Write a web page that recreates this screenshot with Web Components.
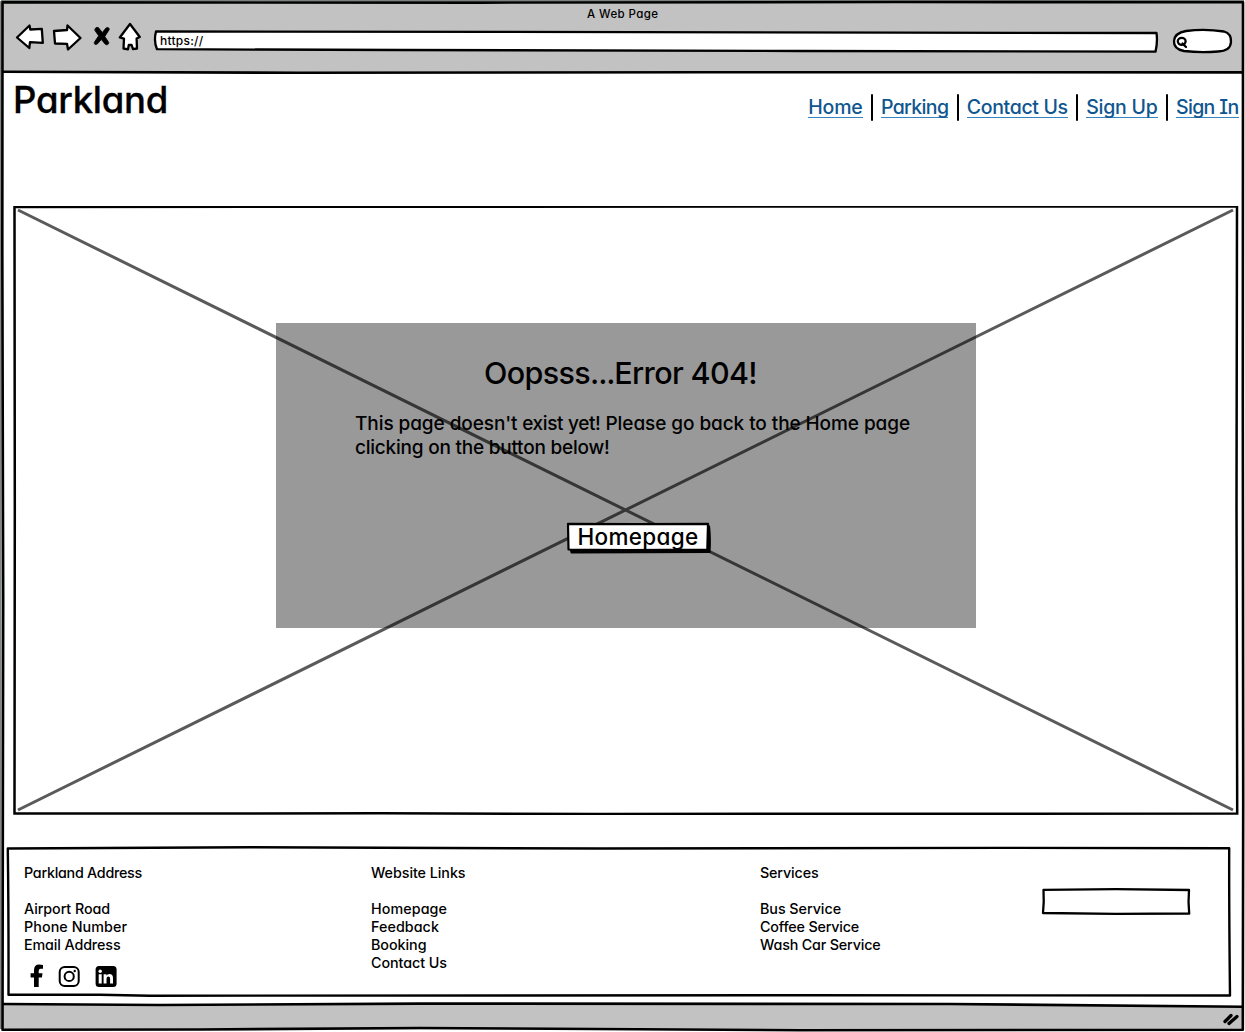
<!DOCTYPE html>
<html lang="en">
<head>
<meta charset="utf-8">
<title>A Web Page</title>
<style>
html,body{margin:0;background:#fff}
body{font-family:Inter,"Liberation Sans",sans-serif;font-feature-settings:"cv11","cv08";font-weight:500;color:#000;width:1245px;height:1032px;overflow:hidden}
</style>
</head>
<body>
<browser-window>
  <browser-bar slot="bar"></browser-bar>
  <site-header></site-header>
  <error-hero></error-hero>
  <site-footer></site-footer>
</browser-window>
<script>
const define = (name, html, after) => customElements.define(name, class extends HTMLElement {
  connectedCallback() {
    if (this.shadowRoot) return;
    this.attachShadow({mode: 'open'}).innerHTML = html;
    if (after) after(this);
  }
});

/* Text tracked so that it fills the width given in its "w" attribute.
   Inner spans keep their own tracking. */
define('fit-text', `<style>:host{display:block;width:max-content;white-space:pre;line-height:inherit}span{display:inline-block}</style><span><slot></slot></span>`, el => {
  const s = el.shadowRoot.querySelector('span');
  let n = el.textContent.length;
  for (const k of el.children) n -= k.textContent.length;
  const natural = s.getBoundingClientRect().width;
  s.style.letterSpacing = ((+el.getAttribute('w') - natural) / n).toFixed(3) + 'px';
});

define('browser-window', `<style>
:host{display:grid;width:1245px;height:1032px}
svg,.col{grid-area:1/1}
.col{display:grid;grid-template-rows:74px 132px 609px 1fr;min-width:0;min-height:0}
</style>
<svg width="1245" height="1032" fill="none" stroke="#000" stroke-width="2.600" stroke-linejoin="round">
<path fill="#c2c2c2" stroke="none" d="M3 3H1242V72.500H3zM3 1004L800 1004L1242 1006.500V1029.500H3z"/>
<path stroke="#7b827b" stroke-width="1.500" d="M1 .8H1244M.8 1V1029"/>
<path d="M2.500 2.300L480 2.600L900 2L1243 2.300L1242.800 400L1243.200 800L1242.800 1029.800L800 1030.200L420 1028L200 1029.500L2.500 1029.800L3.200 600L2.300 250z"/>
<path d="M3 71.800L300 72.800L700 72.200L1243 72.400M3 1004L160 1005L420 1003.600L950 1004L1243 1006.800"/>
<path stroke-width="3.300" stroke-linecap="round" d="M1225 1021.500L1231 1015.500M1229 1023.500L1237 1016.500"/>
</svg>
<div class="col"><slot name="bar"></slot><slot></slot></div>`);

define('browser-bar', `<style>
:host{display:grid}
svg,.c{grid-area:1/1}
.c{display:grid;grid-template-rows:30px 1fr}
.t{font-size:11.500px;line-height:15px;padding:7px 0 0 587px}
.u{font-size:12px;line-height:16px;padding:3px 0 0 160px}
</style>
<svg width="1245" height="74" fill="#fff" stroke="#000" stroke-width="2.300" stroke-linejoin="round" stroke-linecap="round">
<path d="M17 37.500L29.500 25.500L30.300 29.500L41.800 28.800L42.800 42.800L30 42.200L29.300 48z"/>
<path d="M54 31L67 30L67.500 25.500L80.500 38L68 49.500L67 43.800L55 43.500z"/>
<path d="M130 24L139.800 37L136.600 38.500L137 48.500L133 49.200L131.600 45L128.800 45L128 49.300L123.500 48.500L124 38.600L119.800 37.500z"/>
<path fill="#000" stroke-width=".8" d="M94.800 30Q95 26.800 98.300 27.500L102.300 32.500L106 28Q109 26.500 109.300 29.500L104.800 36.500L108.800 42.500Q108.300 45.800 105.300 44.300L101.300 39.500L97.300 44Q94 45.500 94.300 42.300L98.500 36z"/>
<path d="M156 31.500L500 31.800L900 32.700L1156.500 33Q1157.800 42 1155.500 51.700L800 51L400 50L157 49.200Q153.500 41 156 31.500z"/>
<path d="M1186 31Q1205 28.500 1224 31.500Q1231.500 33.500 1231 42Q1230.500 51 1218 51.500Q1200 53 1184 51Q1173.500 49 1174 41Q1174.500 33 1186 31z"/>
<ellipse cx="1181.700" cy="41.300" rx="3.900" ry="3.500"/><path d="M1182.500 43.500L1186 47" stroke-width="2.300"/>
</svg>
<div class="c"><fit-text class="t" w="71.500">A Web Page</fit-text><fit-text class="u" w="43.500">https://</fit-text></div>`);

define('site-header', `<style>
:host{display:flex;justify-content:space-between;align-items:flex-start;padding:0 6.500px 0 13px}
.logo{font-size:36.500px;line-height:48px;padding-top:2px;-webkit-text-stroke:.3px #000}
</style>
<fit-text class="logo" w="155">Parkland</fit-text>
<nav-links></nav-links>`);

define('nav-links', `<style>
:host{display:flex;padding-top:20px}
a{display:block;box-sizing:border-box;color:#0f568f;font-size:19.500px;line-height:24px;height:23px;border-bottom:1px solid #3583c0;white-space:nowrap;margin-top:1px}
i{width:2px;height:27px;background:#000;margin:0 8.200px;border-radius:1px}
</style>
<a><fit-text w="54.200">Home</fit-text></a><i></i><a><fit-text w="67.500">Parking</fit-text></a><i></i><a><fit-text w="101">Contact Us</fit-text></a><i></i><a><fit-text w="71.500">Sign Up</fit-text></a><i></i><a><fit-text w="62.500">Sign In</fit-text></a>`);

define('error-hero', `<style>
:host{display:grid;width:1245px}
svg,.wrap{grid-area:1/1}
.wrap{padding:117px 0 0 276px}
.panel{box-sizing:border-box;width:700px;height:305px;background:rgba(0,0,0,.4);display:flex;flex-direction:column;align-items:flex-start;padding:30px 0 0 79px}
h1{margin:0 0 0 129px;font-weight:500;font-size:30.500px;line-height:40px}
p{margin:19px 0 0;font-size:19px;line-height:24px}
.dots{letter-spacing:-1.200px}
.tight{letter-spacing:-.350px}
home-button{margin:62px 0 0 211px}
</style>
<svg width="1245" height="609" fill="none" stroke="#000" stroke-width="2.500">
<path d="M14.500 .9L500 .8L800 .4L1237 .6L1236.500 300L1237.200 607.500L600 608L380 607.300L14.500 607.600L14.800 300z"/>
<path stroke="#5a5a5a" stroke-width="3" d="M18 4L1233 604M1233 4L18 604"/>
</svg>
<div class="wrap"><div class="panel">
<h1><fit-text w="273">Oopsss<span class="dots">...</span>Error 404!</fit-text></h1>
<p><fit-text w="555">This page doesn't<span class="tight"> exist yet!</span> Please go back to the Home page</fit-text><fit-text w="254.500">clicking on the button below!</fit-text></p>
<home-button>Homepage</home-button>
</div></div>`);

define('home-button', `<style>
:host{display:grid;width:146px;height:32px}
svg,fit-text{grid-area:1/1}
fit-text{font-size:22.500px;line-height:29px;padding-left:11.500px}
</style>
<svg width="146" height="32"><path d="M4 5L144 3.500Q145.500 16 144.500 31L5 31.500Q3 30 4 5z"/><path d="M2 1.800L70 2.200L142 1.800L141.300 27.500L60 28L2.500 27.500z" fill="#fff" stroke="#000" stroke-width="2.200" stroke-linejoin="round"/></svg>
<fit-text w="121">Homepage</fit-text>`);

define('link-column', `<style>
:host{display:block;font-size:14.300px;line-height:18px}
.h{margin-bottom:18px}
</style><div class="h"><slot name="title"></slot></div><slot></slot>`);

define('social-icons', `<style>:host{display:flex;align-items:center;gap:13px;padding:10px 0 0 6.400px}svg{display:block}</style>
<svg width="14" height="24" viewBox="0 0 14 24"><path d="M4 23V13.400H.6V9.300H4V6.300Q4 .6 9 .6Q11.500 .6 13 1V4.700H10.700Q8.700 4.700 8.700 7V9.300H12.500L11.900 13.400H8.700V23z"/></svg>
<svg width="24" height="24" viewBox="0 0 24 24" fill="none" stroke="#000"><rect x="2.700" y="2.900" width="19" height="19" rx="5" stroke-width="2"/><circle cx="12.200" cy="12.400" r="4.600" stroke-width="2"/><circle cx="17.700" cy="7" r="1.200" fill="#000" stroke="none"/></svg>
<svg width="24" height="24" viewBox="0 0 24 24"><rect x="1.600" y="2" width="21" height="21" rx="3.500"/><path fill="#fff" d="M4.700 10.200H7.700V19.500H4.700zM9.600 10.200H12.400V11.500Q13.400 10 15.400 10Q19 10 19 14.200V19.500H16.100V14.800Q16.100 12.500 14.400 12.500Q12.500 12.500 12.500 14.900V19.500H9.600z"/><circle cx="6.200" cy="7.200" r="1.700" fill="#fff"/></svg>`);

define('site-footer', `<style>
:host{display:grid;width:1245px;padding-top:30px}
.frame,.cols{grid-area:1/1}
.cols{display:grid;grid-template-columns:347px 389px 281px 1fr;align-content:start;padding:19px 0 0 24px}
.field{display:block;margin-top:24px}
</style>
<svg class="frame" width="1245" height="155" fill="none" stroke="#000" stroke-width="2.400" stroke-linejoin="round"><path d="M7.800 3.500L250 2.300L600 3.500L1000 2.900L1229.200 3.200Q1229 60 1230 150.500L800 150.300L150 150.700L100 149.800L8.500 149.800Q8.700 70 7.800 3.500z"/></svg>
<div class="cols">
<link-column><fit-text slot="title" w="118">Parkland Address</fit-text><fit-text w="86">Airport Road</fit-text><fit-text w="103">Phone Number</fit-text><fit-text w="96.500">Email Address</fit-text><social-icons></social-icons></link-column>
<link-column><fit-text slot="title" w="94.500">Website Links</fit-text><fit-text w="76">Homepage</fit-text><fit-text w="68">Feedback</fit-text><fit-text w="55.500">Booking</fit-text><fit-text w="76">Contact Us</fit-text></link-column>
<link-column><fit-text slot="title" w="58.500">Services</fit-text><fit-text w="81">Bus Service</fit-text><fit-text w="99">Coffee Service</fit-text><fit-text w="120.500">Wash Car Service</fit-text></link-column>
<svg class="field" width="150" height="29" fill="none" stroke="#000" stroke-width="2.300" stroke-linejoin="round"><path d="M2.500 1.900L75 1.200L148 2Q147 14 148.200 25.500L75 25.800L2 25Q3.200 14 2.500 1.900z"/></svg>
</div>`);
</script>
</body>
</html>
